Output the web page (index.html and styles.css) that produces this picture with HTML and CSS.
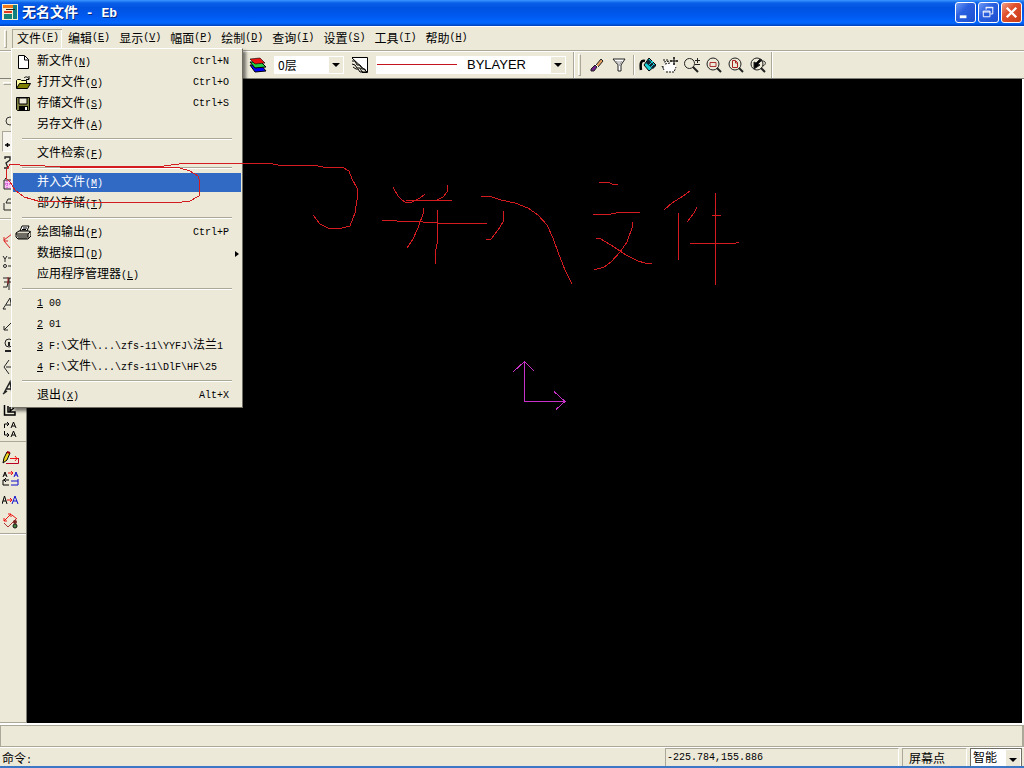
FILE: index.html
```html
<!DOCTYPE html>
<html lang="zh-CN">
<head>
<meta charset="utf-8">
<title>无名文件 - Eb</title>
<link rel="stylesheet" href="styles.css">
</head>
<body>
<div class="window">
  <header class="titlebar">
    <svg class="app-icon" viewBox="0 0 16 16"><rect width="16" height="16" fill="#f4edd2"/><rect x="1" y="1" width="10" height="3" fill="#f07818"/><rect x="11" y="1" width="4" height="14" fill="#108080"/><rect x="4" y="5" width="9" height="1" fill="#222"/><rect x="2" y="7" width="8" height="2" fill="#e33a20"/><rect x="2" y="10" width="8" height="5" fill="#168578"/></svg>
    <h1 class="title"><span class="title-cjk">无名文件</span> - Eb</h1>
    <div class="window-buttons">
      <button class="win-btn" aria-label="最小化"><svg viewBox="0 0 20 20"><rect x="4" y="13" width="7" height="3" fill="#fff"/></svg></button>
      <button class="win-btn" aria-label="还原"><svg viewBox="0 0 20 20" fill="none" stroke="#fff"><path d="M7.500 7V4.500h7v7H12M7 5h8"/><path d="M4.500 8.500h7v6h-7zM4 9.500h8"/></svg></button>
      <button class="win-btn close" aria-label="关闭"><svg viewBox="0 0 20 20"><path d="M5 5l10 10M15 5L5 15" stroke="#fff" stroke-width="2.500"/></svg></button>
    </div>
  </header>

  <nav class="menubar">
    <span class="grip"></span>
    <button class="menu-btn open"><b>文件</b>(<u>F</u>)</button>
    <button class="menu-btn"><b>编辑</b>(<u>E</u>)</button>
    <button class="menu-btn"><b>显示</b>(<u>V</u>)</button>
    <button class="menu-btn"><b>幅面</b>(<u>P</u>)</button>
    <button class="menu-btn"><b>绘制</b>(<u>D</u>)</button>
    <button class="menu-btn"><b>查询</b>(<u>I</u>)</button>
    <button class="menu-btn"><b>设置</b>(<u>S</u>)</button>
    <button class="menu-btn"><b>工具</b>(<u>T</u>)</button>
    <button class="menu-btn"><b>帮助</b>(<u>H</u>)</button>
  </nav>

  <div class="toolbar">
    <div class="tool-group layers">
      <button class="tool" aria-label="层控制"><svg viewBox="0 0 18 18"><path d="M1 9l11 0 5 6-11 1z" fill="#00f" stroke="#000"/><path d="M1 6l11 0 5 5-11 1z" fill="#2c4" stroke="#000"/><path d="M1 3l10-1 5 5-10 1z" fill="#e11" stroke="#000" stroke-width=".6"/></svg></button>
      <div class="combo layer-combo"><select aria-label="当前层"><option>0层</option></select><span class="arrow"></span></div>
      <button class="tool" aria-label="线型"><svg viewBox="0 0 18 18"><path d="M1 2h16v14z" fill="#fff"/><path d="M1 1.500h15.500v15H11M1 2l15 14M1 5l3 0 2 4h3l2 4h3l1 3M1 8l3 1 2 3h3l2 4h3M2 11l3 2h2l2 3h3" fill="none" stroke="#000"/></svg></button>
      <div class="combo line-combo"><select aria-label="颜色线型"><option>BYLAYER</option></select><span class="line-sample"></span><span class="arrow"></span></div>
    </div>
    <div class="tool-group">
      <span class="grip"></span>
      <button class="tool eraser" aria-label="删除"><svg viewBox="0 0 18 18"><path d="M13 3l2 2-5 6-2-2z" fill="#e8a060" stroke="#222"/><path d="M7 9l2 2-3 4-3 0v-2z" fill="#70208a" stroke="#222"/><path d="M7 8l3 3" stroke="#fff"/></svg></button>
      <button class="tool" aria-label="过滤"><svg viewBox="0 0 18 18"><path d="M3 3h12l-4 6v6H8V9z" fill="#fff" stroke="#222"/><path d="M6 5l3 5 3-5" fill="#ccc" stroke="#999"/></svg></button>
      <span class="divider"></span>
      <button class="tool" aria-label="重画"><svg viewBox="0 0 18 18"><path d="M5 9l5-7 7 7-7 6z" fill="#19d0d8" stroke="#000"/><path d="M9 3l8 7-3 3-7-6z" fill="#123"/><path d="M10 9l4-4M12 11l3-3" stroke="#20d8dc"/><path d="M6 5C2 4 1 7 2 14" stroke="#000" stroke-width="2.500" fill="none"/></svg></button>
      <button class="tool" aria-label="动态平移"><svg viewBox="0 0 18 18"><path d="M3 15l-2-5 2-1 2 2-2-5 5 1 4-1 3 4-2 6z" fill="#fff"/><path d="M3 14l-2-4M3 6l6-1M4 8l5-1M1 11l3 0M2 4h6M5 16h8l2-5" stroke="#111" stroke-dasharray="2 1" fill="none"/><path d="M9 5h8M13 1v8M12 2h2M12 8h2M10 4v2M16 4v2" stroke="#000"/></svg></button>
      <button class="tool" aria-label="动态缩放"><svg viewBox="0 0 18 18" fill="none" stroke="#222"><circle cx="6.500" cy="7.500" r="5"/><path d="M14.500 2v5M12 4.500h5M12 8.500h5"/><path d="M10 11l5 5" stroke-width="2"/></svg></button>
      <button class="tool" aria-label="显示窗口"><svg viewBox="0 0 18 18" fill="none" stroke="#222"><circle cx="8" cy="8" r="6"/><path d="M5 6.500h6v4H5z" stroke="#a33"/><path d="M12 12l4 4" stroke-width="2"/></svg></button>
      <button class="tool" aria-label="显示全部"><svg viewBox="0 0 18 18" fill="none" stroke="#222"><circle cx="8" cy="8" r="6"/><path d="M5.500 4.500h3l2 2v5h-5zM8.500 5v2h2" stroke="#a22"/><path d="M12 12l4 4" stroke-width="2"/></svg></button>
      <button class="tool" aria-label="显示回溯"><svg viewBox="0 0 18 18" fill="none" stroke="#222"><circle cx="8" cy="8" r="6"/><path d="M5 6v7l6-4-2-1 4-4-2-1-4 4z" fill="#000"/><path d="M12 12l4 4" stroke-width="2"/><path d="M11 5c6-1 7 3 3 5"/></svg></button>
    </div>
  </div>

  <main class="workspace">
    <aside class="palette">
      <span class="palette-grip"></span>
      <div class="palette-group first">
        <button class="side" aria-label="圆"><svg viewBox="0 0 18 18"><circle cx="8" cy="9" r="4" fill="none" stroke="#333"/></svg></button>
        <button class="side pressed" aria-label="移动"><svg viewBox="0 0 18 18"><path d="M2 12h5M4.500 10v4" stroke="#000" stroke-width="1.500"/></svg></button>
        <button class="side" aria-label="曲线"><svg viewBox="0 0 18 18"><path d="M3 5V3h5v3l-4 3 2 5H2" fill="none" stroke="#222" stroke-width="1.300"/></svg></button>
        <button class="side" aria-label="图块"><svg viewBox="0 0 18 18"><path d="M2 5h9v9H2zM3 4l2-2" fill="#f9c6f2" stroke="#222"/><path d="M3 9h6M5 6v8" stroke="#c2c" stroke-dasharray="1 1"/></svg></button>
        <button class="side" aria-label="实体"><svg viewBox="0 0 18 18"><path d="M2 7v7h8V7H4l2-4h6v7" fill="none" stroke="#222"/></svg></button>
      </div>
      <div class="palette-group">
        <button class="side" aria-label="斜标注"><svg viewBox="0 0 18 18"><path d="M2 8l8-6M2 9l6 7M2 5v4h4M9 1l3 4" fill="none" stroke="#d22"/></svg></button>
        <button class="side" aria-label="坐标"><svg viewBox="0 0 18 18"><path d="M1 3l2 3 2-3M3 6v3M6 5h5M6 13h5" fill="none" stroke="#222"/><circle cx="3" cy="13" r="1.500" fill="none" stroke="#222"/></svg></button>
        <button class="side" aria-label="公差"><svg viewBox="0 0 18 18"><path d="M1 4h9M2 8h7M1 13h4l2-9v12" fill="none" stroke="#222"/><path d="M6 3v7" stroke="#a22"/></svg></button>
        <button class="side" aria-label="文字"><svg viewBox="0 0 18 18"><path d="M1 14L8 3l2 11M4 10h5M1 14h3" fill="none" stroke="#222"/></svg></button>
        <button class="side" aria-label="引出"><svg viewBox="0 0 18 18"><path d="M2 14l8-8h4M2 14v-4M2 14h4" fill="none" stroke="#222"/></svg></button>
        <button class="side" aria-label="基准"><svg viewBox="0 0 18 18"><circle cx="7" cy="6" r="4" fill="none" stroke="#222"/><path d="M7 5v4M3 14h6" stroke="#222" stroke-width="2"/></svg></button>
        <button class="side" aria-label="粗糙度"><svg viewBox="0 0 18 18"><path d="M7 2L2 9l5 7M4 9h8" fill="none" stroke="#222"/></svg></button>
        <button class="side" aria-label="文字引出"><svg viewBox="0 0 18 18"><path d="M2 14L8 3l2 11M4 10h5M1 15l4-3" fill="none" stroke="#222" stroke-width="1.500"/></svg></button>
        <button class="side" aria-label="剖切"><svg viewBox="0 0 18 18"><path d="M2.500 5v10H13v-3H6V6M8 7v4l4-3" fill="none" stroke="#000" stroke-width="1.500"/></svg></button>
        <button class="side" aria-label="向视"><svg viewBox="0 0 18 18"><path d="M2.500 7V3H7M5 1l2 2-2 2M2.500 10v4H7M5 12l2 2-2 2M9 7l2.500-6L14 7M10 5h3M9 16l2.500-6L14 16M10 14h3" fill="none" stroke="#000"/></svg></button>
      </div>
      <div class="palette-group edit">
        <button class="side" aria-label="标注修改"><svg viewBox="0 0 18 18"><path d="M4 14.500h12.500V9" stroke="#b02" fill="none"/><path d="M8 9.500h8M13 7l2 2.500-2 2.500" stroke="#e11" fill="none"/><path d="M1 14l1-5 3-6 3 1-3 7z" fill="#f0d820" stroke="#000"/><path d="M5 3l3 1" stroke="#a00" stroke-width="2"/></svg></button>
        <button class="side" aria-label="属性替换"><svg viewBox="0 0 18 18" fill="none"><path d="M1 7l2-5 2 5M2 5h2M7 10H1v5h6M4 8l-2 2 2 2" stroke="#000"/><path d="M6 3h5M9 1l2 2-2 2" stroke="#e11"/><path d="M12 7l2-5 2 5M13 5h2M9 11h7M9 15h7V9" stroke="#11c"/></svg></button>
        <button class="side" aria-label="文字替换"><svg viewBox="0 0 18 18" fill="none"><path d="M0 13l2.500-8L5 13M1 10h3" stroke="#000"/><path d="M5 9h5M8 7l2 2-2 2" stroke="#e11"/><path d="M10 13l3-8 3 8M11 10h4" stroke="#11c"/></svg></button>
        <button class="side" aria-label="标注驱动"><svg viewBox="0 0 18 18"><path d="M2 9l7-7M2 6v3h3M6 2h3v3M10 3l5 4" fill="none" stroke="#e11"/><path d="M2 11l4 4 8-8" fill="none" stroke="#a33"/><circle cx="13" cy="10" r="2" fill="#722"/><circle cx="13" cy="14" r="2" fill="#484" stroke="#111"/></svg></button>
      </div>
    </aside>
    <section class="canvas" aria-label="绘图区"></section>
  </main>

  <div class="command-panel"></div>
  <footer class="statusbar">
    <span class="prompt"><b>命令</b>:</span>
    <span class="pane">-225.784,155.886</span>
    <span class="pane mode"><b>屏幕点</b></span>
    <div class="combo snap-combo"><select aria-label="捕捉方式"><option>智能</option></select><span class="arrow"></span></div>
  </footer>

  <div class="dropdown" role="menu">
    <button class="item" role="menuitem"><svg class="icon" viewBox="0 0 16 16"><path d="M3.500 1.500h6l4 4v9h-10z" fill="#fff" stroke="#000"/><path d="M9.500 2v4h4" fill="none" stroke="#000"/></svg><span><b>新文件</b>(<u>N</u>)</span><kbd>Ctrl+N</kbd></button>
    <button class="item" role="menuitem"><svg class="icon" viewBox="0 0 16 16"><path d="M1.500 13V5.500l1-1h3l1 1h5V8" fill="#ffffa0" stroke="#000"/><path d="M1.500 13.500l3-5h11l-3 5z" fill="#808000" stroke="#000"/><path d="M9 3c2-2 4-1 5 1M14 1v3.500h-3" fill="none" stroke="#000"/></svg><span><b>打开文件</b>(<u>O</u>)</span><kbd>Ctrl+O</kbd></button>
    <button class="item" role="menuitem"><svg class="icon" viewBox="0 0 16 16"><path d="M1.500 1.500h13v13h-12l-1-1z" fill="#808040" stroke="#000"/><path d="M4 2h8v6H4z" fill="#ece9d8" stroke="#000"/><path d="M4 10h9v4H4z" fill="#000"/><path d="M10 11h2v3h-2z" fill="#fff"/></svg><span><b>存储文件</b>(<u>S</u>)</span><kbd>Ctrl+S</kbd></button>
    <button class="item" role="menuitem"><i class="icon"></i><span><b>另存文件</b>(<u>A</u>)</span></button>
    <hr>
    <button class="item" role="menuitem"><i class="icon"></i><span><b>文件检索</b>(<u>F</u>)</span></button>
    <hr>
    <button class="item active" role="menuitem"><i class="icon"></i><span><b>并入文件</b>(<u>M</u>)</span></button>
    <button class="item" role="menuitem"><i class="icon"></i><span><b>部分存储</b>(<u>T</u>)</span></button>
    <hr>
    <button class="item" role="menuitem"><svg class="icon" viewBox="0 0 16 16"><path d="M5 6l2-5h7l-2 5z" fill="#fff" stroke="#000"/><path d="M1 8l3-2h10l2 1v4l-3 3H3l-2-2z" fill="#ddd8c8" stroke="#000"/><path d="M1 9h12l2-2M2 11h11M3 13h9M13 9v4M8 3h4M7 4.500h4" fill="none" stroke="#000"/></svg><span><b>绘图输出</b>(<u>P</u>)</span><kbd>Ctrl+P</kbd></button>
    <button class="item" role="menuitem"><i class="icon"></i><span><b>数据接口</b>(<u>D</u>)</span><span class="submenu"></span></button>
    <button class="item" role="menuitem"><i class="icon"></i><span><b>应用程序管理器</b>(<u>L</u>)</span></button>
    <hr>
    <button class="item" role="menuitem"><i class="icon"></i><span><u>1</u> 00</span></button>
    <button class="item" role="menuitem"><i class="icon"></i><span><u>2</u> 01</span></button>
    <button class="item" role="menuitem"><i class="icon"></i><span><u>3</u> F:\<b>文件</b>\...\zfs-11\YYFJ\<b>法兰</b>1</span></button>
    <button class="item" role="menuitem"><i class="icon"></i><span><u>4</u> F:\<b>文件</b>\...\zfs-11\DlF\HF\25</span></button>
    <hr>
    <button class="item" role="menuitem"><i class="icon"></i><span><b>退出</b>(<u>X</u>)</span><kbd>Alt+X</kbd></button>
  </div>

  <svg class="ink" width="1024" height="768" viewBox="0 0 1024 768" aria-hidden="true">
    <g class="pen">
      <path d="M313 215L320 224L328 228H342L350 226L355 213L357 200V188L352 179L349 171L342 167L323 167L315 165.500H280L271 163.500H183L160 166.500H60L30 165.500L10 164.500L7 169L6 178L10 182L15 190L24 197L38 201L90 202.500H178L190 201L199 196L200 182L198 176L190 171L178 167.500H60"/>
      <path d="M393 187l5 9 4 4 3 2h7l8-4 5-4M406 200.500h46M447 185v7l-4 5-6 3h-8M382 220l15 1 26 1 14 1h50M423 208v6l-5 14-5 11-6 9M437 210v34l-2 10v10M481 196h8l12 4 14 3 13 5 10 7 9 10 6 13 5 14 7 18 7 14M503 211v11l-5 8-7 9h-5"/>
      <path d="M599 182h9l4 2h6M593 215l18-1 10-2h19M632 222v6l-5 14-7 10-9 10-7 5-10 3M596 238h3l12 7 15 10 12 6 7 2h7M690 191l-7 5-11 7-8 7M697 207l-3 6-7 9M678.500 213v47M715.500 193v92M712 215.500h9M690 243.500h43l6-1"/>
    </g>
    <path class="axes" d="M524.500 362v39.500H565M513 372l11.500-10.500L534 371M554 391.500l11 10-9 8"/>
  </svg>
</div>
</body>
</html>
```
FILE: styles.css
```css
* { box-sizing: border-box; }

body {
  margin: 0;
  background: #ece9d8;
  color: #000;
  font: 10px/16px "Liberation Mono", "Noto Sans CJK SC", monospace;
}

button, select { font: inherit; color: inherit; border: 0; padding: 0; margin: 0; background: none; border-radius: 0; }
b { font: 12px/16px "Noto Sans CJK SC", sans-serif; }
u { text-underline-offset: 1px; }

.window { position: relative; display: flex; flex-direction: column; height: 100vh; overflow: hidden; border-bottom: 2px solid #3b77c5; }

.titlebar {
  display: flex;
  align-items: center;
  gap: 4px;
  height: 26px;
  padding: 0 2px 2px;
  color: #fff;
  background: linear-gradient(#3c96ff 0, #0a5fe8 3px, #0053e0 8px, #0058ee 15px, #0066ff 23px, #0040b8 26px);
}
.app-icon { width: 16px; height: 16px; }
.title { flex: 1; margin: 0; white-space: pre; font: bold 13px/20px "Liberation Mono", monospace; text-shadow: 1px 1px #0a2a80; }
.title-cjk { font: bold 14px/20px "Noto Sans CJK SC", sans-serif; }
.window-buttons { display: flex; gap: 2px; }
.win-btn { width: 21px; height: 21px; border: 1px solid #fff; border-radius: 3px; background: linear-gradient(135deg, #6f9cf5, #2a5fe0 40%, #1c50d0); }
.win-btn.close { background: linear-gradient(135deg, #f0a088, #e0512c 40%, #c83c18); }
.win-btn svg { display: block; width: 19px; height: 19px; }

.grip { width: 3px; border: 1px solid; border-color: #fff #aca899 #aca899 #fff; }

.menubar { display: flex; align-items: stretch; gap: 1px; height: 25px; padding: 2px 4px 0; border-top: 1px solid #fff; border-bottom: 1px solid #aca899; }
.menubar .grip { margin: 1px 4px 2px 0; }
.menu-btn { display: flex; align-items: center; padding: 0 3px 3px 5px; white-space: nowrap; }
.menu-btn.open { box-shadow: inset 1px 1px #aca899, inset -1px 0 #fff; }

.toolbar { display: flex; height: 28px; border-top: 1px solid #fff; border-bottom: 1px solid #808078; }
.tool-group { display: flex; align-items: center; gap: 4px; padding: 0 4px; border-right: 1px solid #aca899; box-shadow: 1px 0 #fff; }
.tool-group.layers { padding: 0 7px 0 249px; gap: 7px; }
.tool-group .grip { height: 22px; }
.tool { width: 18px; height: 18px; }
.tool.eraser { margin-left: 3px; }
.tool svg { display: block; width: 18px; height: 18px; }
.divider { width: 2px; height: 20px; margin-left: 1px; border-left: 1px solid #aca899; border-right: 1px solid #fff; }

.combo { position: relative; display: grid; background: #fff; }
.combo select { appearance: none; width: 100%; height: 18px; font: 12px/18px "Noto Sans CJK SC", sans-serif; }
.layer-combo { width: 70px; }
.layer-combo select { padding-left: 4px; }
.line-combo { width: 190px; }
.line-combo select { padding-left: 91px; font: 13px/18px "Liberation Sans", sans-serif; }
.line-sample { position: absolute; left: 1px; top: 8px; width: 80px; height: 1px; background: #c4141c; pointer-events: none; }
.arrow { position: absolute; right: 1px; top: 1px; bottom: 1px; width: 14px; display: grid; place-items: center; background: #ece9d8; pointer-events: none; }
.arrow::after { content: ""; border: 4px solid transparent; border-top-color: #000; border-bottom: 0; }

.workspace { flex: 1; display: flex; min-height: 0; border-right: 2px solid #fff; }
.palette { display: flex; flex-direction: column; gap: 7px; width: 27px; border-right: 1px solid #808078; border-bottom: 1px solid #aca899; }
.palette-grip { height: 3px; margin: 3px 3px 0; border: 1px solid; border-color: #fff #aca899 #aca899 #fff; }
.palette-group { display: flex; flex-direction: column; padding-left: 2px; position: relative; }
.palette-group.first { padding-top: 18px; padding-bottom: 3px; margin-bottom: 4px; border-bottom: 1px solid #aca899; box-shadow: 0 1px #fff; }
.palette-group.edit { border-bottom: 1px solid #aca899; box-shadow: 0 1px #fff, 0 -5px #ece9d8, 0 -6px #aca899; padding-bottom: 2px; }
.side { height: 21px; width: 20px; }
.side svg { display: block; width: 18px; height: 18px; }
.side.pressed { border: 1px solid; border-color: #aca899 #fff #fff #aca899; background: #f6f4ec; }

.canvas { flex: 1; background: #000; }

.command-panel { height: 22px; border: 1px solid #aca899; border-width: 1px 2px 1px 1px; margin-top: 2px; box-shadow: 0 -2px #fff, 0 1px #fff; }

.statusbar { display: grid; grid-template-columns: 1fr 234px 65px 52px; gap: 3px; height: 18px; margin-top: 1px; padding-right: 2px; line-height: 18px; }
.statusbar b { line-height: 18px; }
.prompt { padding: 1px 0 0 2px; }
.pane { border: 1px solid; border-color: #aca899 #fff #fff #aca899; padding-left: 1px; }
.pane.mode { padding-left: 6px; }
.snap-combo { border: 1px solid #716f64; }
.snap-combo select { height: 16px; line-height: 16px; padding-left: 2px; }

.dropdown {
  position: absolute;
  left: 11px;
  top: 48px;
  width: 232px;
  padding: 2px 1px 1px;
  background: #ece9d8;
  border: 1px solid;
  border-color: #fff #716f64 #716f64 #fff;
  box-shadow: 3px 3px 3px rgba(0, 0, 0, .5);
}
.item {
  display: flex;
  align-items: center;
  width: 100%;
  height: 21px;
  padding: 0 12px 0 2px;
  border: solid transparent;
  border-width: 1px 0;
  background-clip: padding-box;
  text-align: left;
  white-space: pre;
}
.item.active { background-color: #316ac5; color: #fff; }
.icon { flex: none; width: 16px; height: 16px; margin-right: 6px; }
kbd { margin-left: auto; font: inherit; }
.submenu { margin: 0 -10px 0 auto; border: 3px solid transparent; border-left: 4px solid #000; border-right: 0; }
.dropdown hr { height: 2px; margin: 3px 9px; border: 0; border-top: 1px solid #aca899; border-bottom: 1px solid #fff; }

.ink { position: absolute; left: 0; top: 0; fill: none; pointer-events: none; shape-rendering: crispEdges; }
.pen { stroke: #d41c20; stroke-width: 1; }
.axes { stroke: #c832c8; }
```
